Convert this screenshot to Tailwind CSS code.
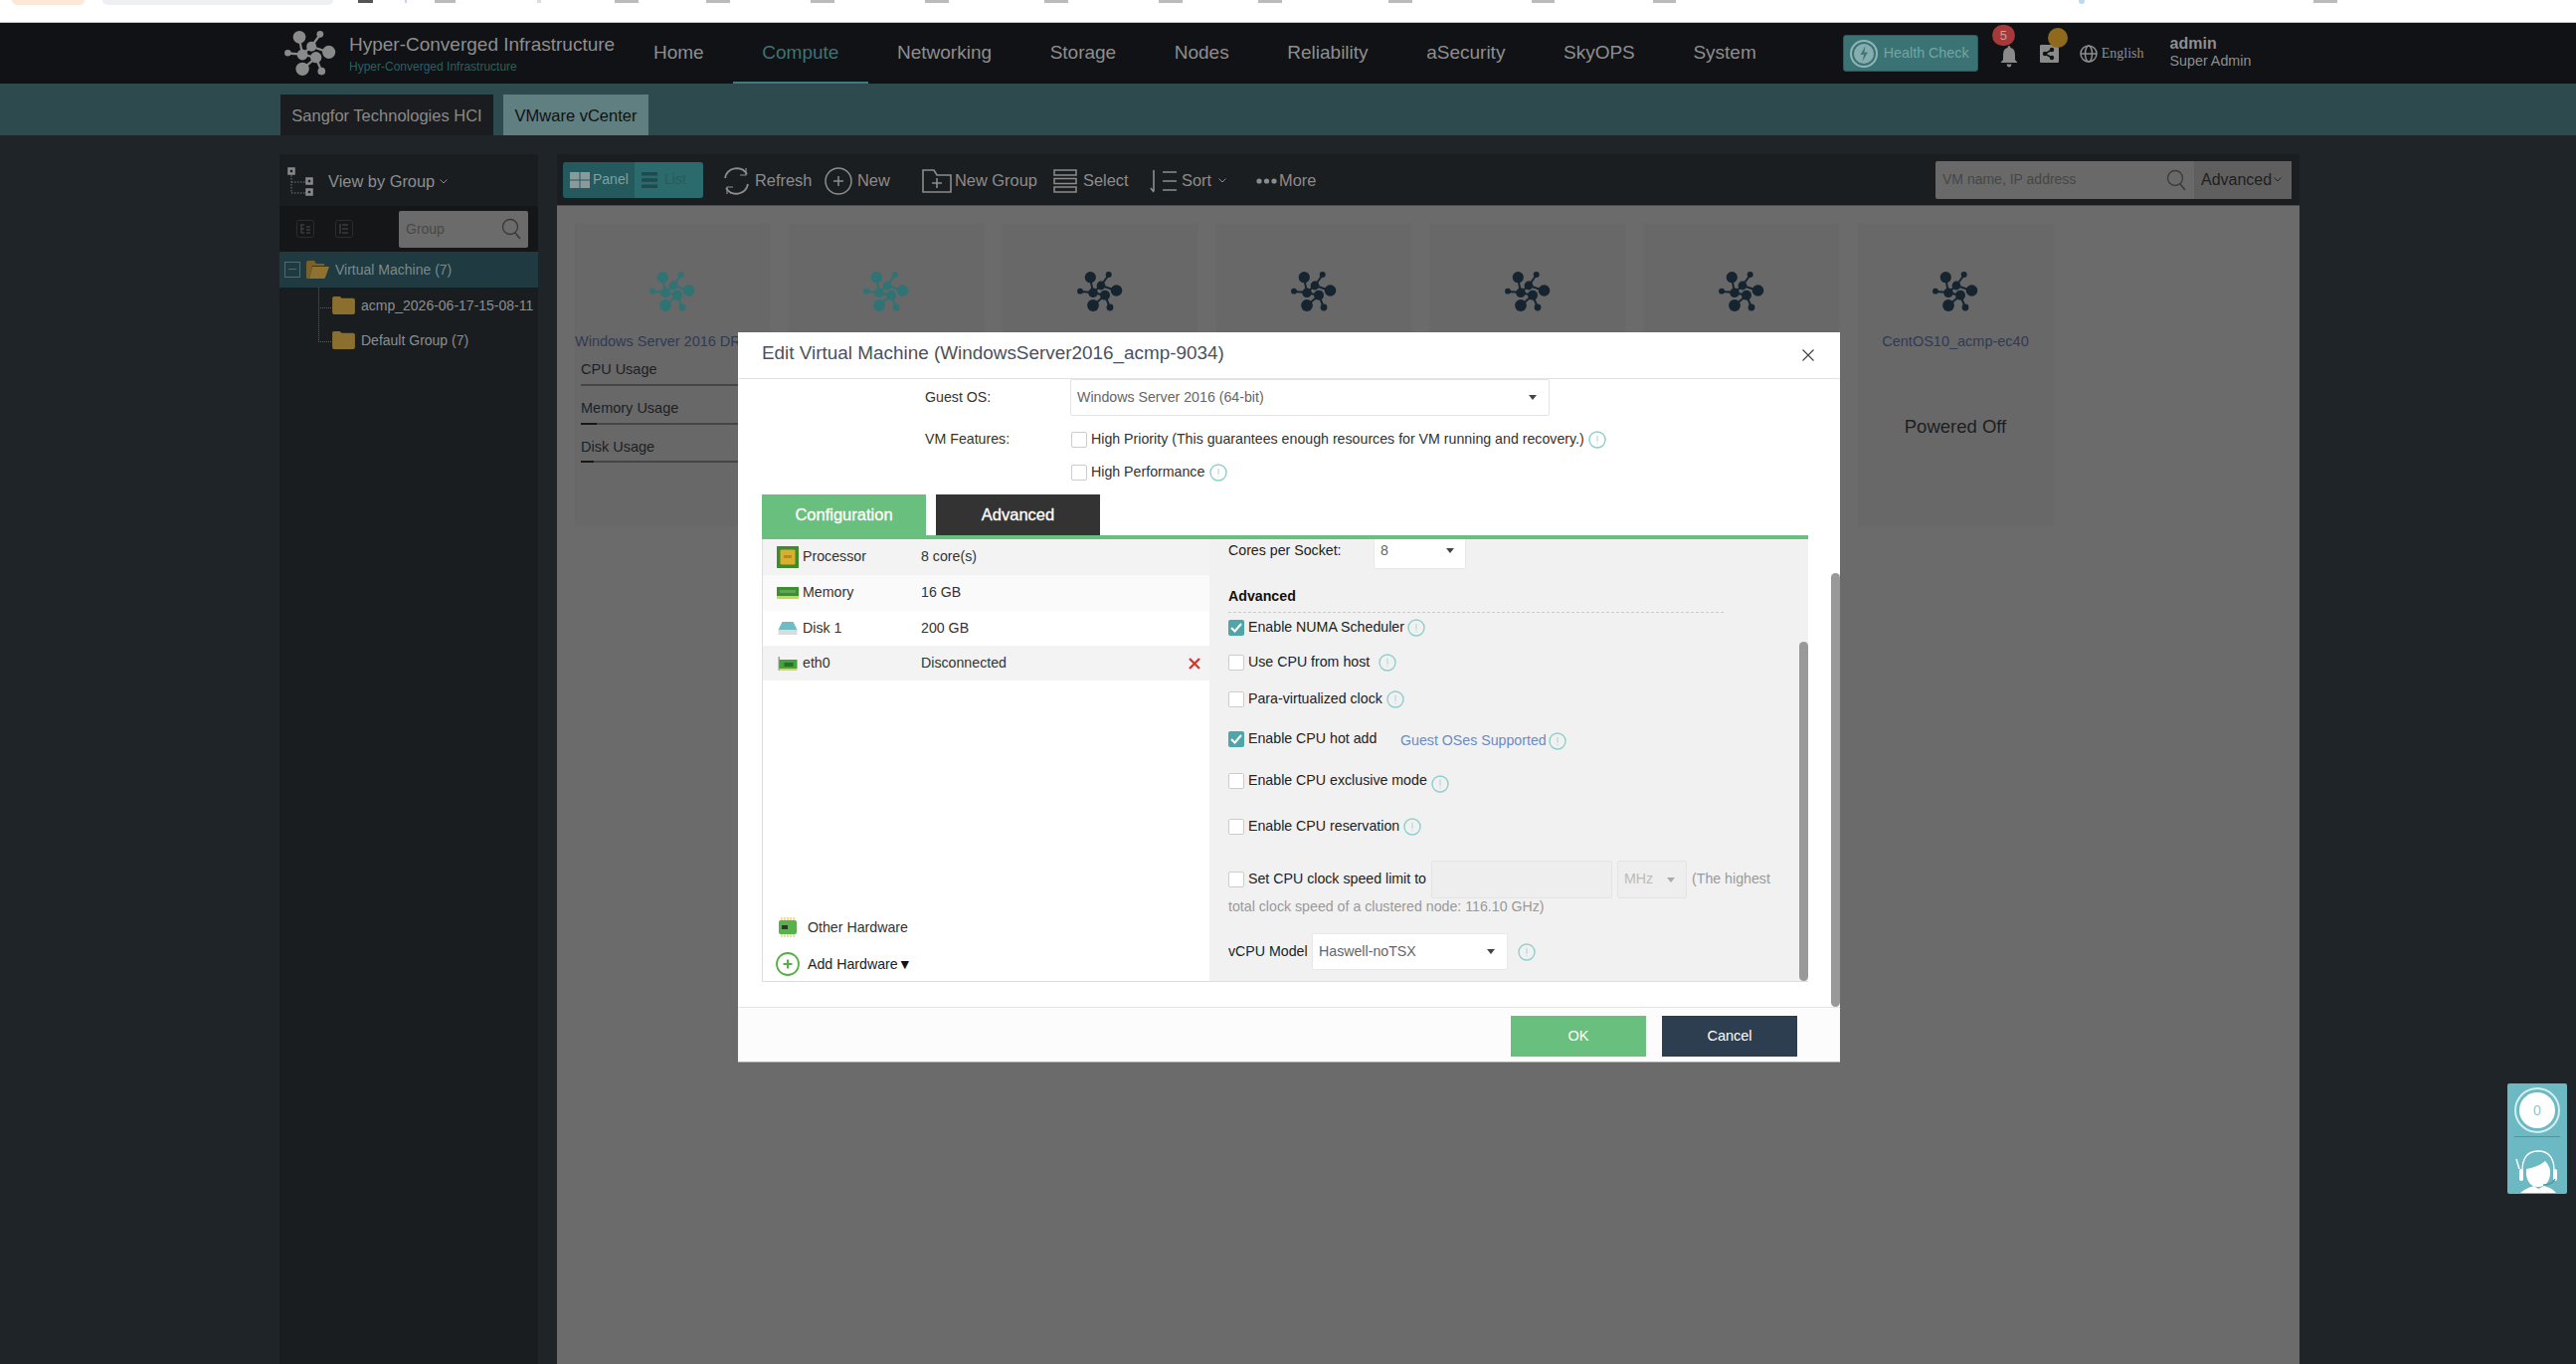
<!DOCTYPE html>
<html lang="en">
<head>
  <meta charset="UTF-8" />
  <title>Hyper-Converged Infrastructure</title>
  <script src="https://cdn.jsdelivr.net/npm/@tailwindcss/browser@4"></script>
</head>
<body class="relative w-[2590px] h-[1371px] overflow-hidden bg-[#1e2427] font-['Liberation_Sans',Arial,sans-serif] text-[14px]">

  <!-- shared icons -->
  <svg class="hidden">
    <symbol id="node" viewBox="0 0 46 40">
      <g stroke="currentColor" stroke-width="2" fill="none">
        <path d="M13 6L16 21M32 3L24 14L39 19M3 20L16 21L28 24L16 34M28 24L33 36M16 21L24 14" />
      </g>
      <g fill="currentColor">
        <circle cx="13.3" cy="5.7" r="5.6" /><circle cx="31.7" cy="3" r="3" /><circle cx="24" cy="14" r="4.4" />
        <circle cx="39.500" cy="19" r="5.800" /><circle cx="3" cy="19.700" r="2.900" /><circle cx="16" cy="21.300" r="4.800" />
        <circle cx="28" cy="23.700" r="5" /><circle cx="16" cy="34" r="5.900" /><circle cx="33" cy="36" r="3.400" />
      </g>
    </symbol>
    <symbol id="info" viewBox="0 0 18 18">
      <circle cx="9" cy="9" r="8" fill="none" stroke="#90cfcc" stroke-width="1.4" />
      <path d="M9 4.8v6M9 12.4v1" stroke="#a5d6d4" stroke-width="1" />
    </symbol>
    <symbol id="lens" viewBox="0 0 20 22">
      <circle cx="9" cy="9" r="7.5" fill="none" stroke="currentColor" stroke-width="1.3" />
      <path d="M14 15l5 6" stroke="currentColor" stroke-width="1.5" />
    </symbol>
    <symbol id="folder" viewBox="0 0 24 20">
      <path d="M0 3q0-2 2-2h6l2 2h12q2 0 2 2v13q0 2-2 2H2q-2 0-2-2z" fill="currentColor" />
    </symbol>
  </svg>

  <!-- bottom edge of the browser bar -->
  <div class="flex items-start h-[23px] bg-white border-b border-[#c8c8c8]">
    <span class="ml-[12px] w-[73px] h-[5px] rounded-b-md bg-[#fde8d8]"></span>
    <span class="ml-[18px] w-[232px] h-[5px] rounded-b-md bg-[#eef0f3]"></span>
    <span class="ml-[25px] w-[15px] h-[3px] bg-[#555]"></span>
    <span class="ml-[32px] w-[2px] h-[3px] bg-[#c9d2f0]"></span>
    <span class="ml-[28px] w-[21px] h-[3px] bg-[#bbb]"></span>
    <span class="ml-[82px] w-[4px] h-[3px] bg-[#ddd]"></span>
    <span class="ml-[74px] w-[24px] h-[3px] bg-[#bbb]"></span>
    <span class="ml-[68px] w-[24px] h-[3px] bg-[#bbb]"></span>
    <span class="ml-[81px] w-[24px] h-[3px] bg-[#bbb]"></span>
    <span class="ml-[91px] w-[24px] h-[3px] bg-[#bbb]"></span>
    <span class="ml-[96px] w-[24px] h-[3px] bg-[#bbb]"></span>
    <span class="ml-[91px] w-[24px] h-[3px] bg-[#bbb]"></span>
    <span class="ml-[76px] w-[24px] h-[3px] bg-[#bbb]"></span>
    <span class="ml-[107px] w-[24px] h-[3px] bg-[#bbb]"></span>
    <span class="ml-[120px] w-[23px] h-[3px] bg-[#bbb]"></span>
    <span class="ml-[99px] w-[23px] h-[3px] bg-[#bbb]"></span>
    <span class="ml-[405px] w-[6px] h-[4px] rounded-b-full bg-[#bcd8f5]"></span>
    <span class="ml-[230px] w-[24px] h-[3px] bg-[#bbb]"></span>
  </div>

  <!-- top nav -->
  <header class="flex items-center h-[61px] bg-[#101216] text-[#8e8e8e]">
    <svg class="ml-[286px] w-[52px] h-[47px] text-[#8a8a8a]"><use href="#node" /></svg>
    <div class="ml-[13px] w-[306px]">
      <div class="text-[19px] leading-[24px] whitespace-nowrap">Hyper-Converged Infrastructure</div>
      <div class="text-[12px] leading-[16px] mt-[2px] text-[#2d5f60] whitespace-nowrap">Hyper-Converged Infrastructure</div>
    </div>
    <nav class="flex items-center h-full text-[19px]">
      <a class="mr-[58.600px]">Home</a>
      <a class="relative h-full flex items-center mr-[58.600px] text-[#3f7273]">Compute<span class="absolute left-[-29px] right-[-30px] bottom-0 h-[2px] bg-[#3f7a7c]"></span></a>
      <a class="mr-[58.600px]">Networking</a>
      <a class="mr-[58.600px]">Storage</a>
      <a class="mr-[58.600px]">Nodes</a>
      <a class="mr-[58.600px]">Reliability</a>
      <a class="mr-[58.600px]">aSecurity</a>
      <a class="mr-[58.600px]">SkyOPS</a>
      <a>System</a>
    </nav>
    <div class="ml-[87px] flex items-center w-[136px] h-[37px] rounded-[3px] bg-[#3b7375] border border-[#2a5a5c] text-[#73a5a5] text-[14.300px] whitespace-nowrap">
      <svg class="ml-[6px] w-[28px] h-[28px]" viewBox="0 0 28 28"><circle cx="14" cy="14" r="13" fill="none" stroke="#8fb5b5" stroke-width="2" /><circle cx="14" cy="14" r="10" fill="#86aeae" /><path d="M15.5 6l-5 9h3.5l-1.500 7 5.500-9.500h-3.500z" fill="#3f7a7c" /></svg>
      <span class="ml-[6px]">Health Check</span>
    </div>
    <div class="relative ml-[22px] w-[18px] h-[36px]">
      <span class="absolute left-[-8px] top-[-11px] w-[23px] h-[21px] rounded-full bg-[#a63a3a] text-[#c9a0a0] text-[13px] leading-[21px] text-center">5</span>
      <svg class="absolute left-0 top-[10px] w-[18px] h-[22px]" viewBox="0 0 18 22"><path d="M9 0q1.500 0 1.500 2q4.500 1 4.500 7v5l2.500 3H.5L3 14V9q0-6 4.500-7Q7.500 0 9 0zM6.500 18.500h5q-.5 3-2.500 3t-2.500-3z" fill="#8a8a8a" /></svg>
    </div>
    <div class="relative ml-[22px] w-[19px] h-[18px] rounded-[1px] bg-[#8a8a8a]">
      <svg class="absolute inset-0 w-[19px] h-[18px]" viewBox="0 0 19 18"><path d="M5 9l7-4M5 9l7 4" stroke="#101216" stroke-width="1.500" /><circle cx="5" cy="9" r="2.200" fill="#101216" /><circle cx="12" cy="5" r="2.200" fill="#101216" /><circle cx="12" cy="13" r="2.200" fill="#101216" /></svg>
      <span class="absolute left-[8px] top-[-17px] w-[20px] h-[20px] rounded-full bg-[#8f6a1c]"></span>
    </div>
    <svg class="ml-[21px] w-[18px] h-[18px]" viewBox="0 0 18 18" fill="none" stroke="#8e8e8e" stroke-width="1.500"><circle cx="9" cy="9" r="8" /><ellipse cx="9" cy="9" rx="3.500" ry="8" /><path d="M1 9h16" /></svg>
    <span class="ml-[4px] font-['Liberation_Serif',serif] text-[14px]">English</span>
    <div class="ml-[26px] -mt-[2px] whitespace-nowrap">
      <div class="font-bold text-[16px] leading-[18px]">admin</div>
      <div class="text-[14.300px] leading-[17px]">Super Admin</div>
    </div>
  </header>

  <!-- platform tabs -->
  <div class="flex items-end gap-[10px] h-[52px] pl-[282px] bg-[#2d4b4f] text-[16.500px]">
    <div class="flex items-center justify-center w-[214px] h-[41px] pt-[2px] bg-[#1a1c1f] text-[#8a8a8a]">Sangfor Technologies HCI</div>
    <div class="flex items-center justify-center w-[146px] h-[41px] pt-[2px] bg-[#5f7f80] text-[#111]">VMware vCenter</div>
  </div>

  <div class="flex pt-[19px] pl-[281px] gap-[19px] h-[1235px]">
    <!-- group tree -->
    <aside class="w-[260px] bg-[#1a1d20] text-[#8a8f91]">
      <div class="flex items-center h-[52px] pl-[8px] pt-[3px]">
        <svg class="w-[28px] h-[30px]" viewBox="0 0 28 30" fill="none"><path d="M4 8v18h14M4 15h14" stroke="#777" stroke-dasharray="1.500 1.500" /><g stroke="#8a8a8a" stroke-width="2.500"><rect x="1.500" y="1.500" width="5" height="5" /><rect x="19.500" y="11.500" width="5" height="5" /><rect x="19.500" y="22.500" width="5" height="5" /></g></svg>
        <span class="ml-[13px] text-[16.400px]">View by Group</span>
        <svg class="ml-[5px] w-[8px] h-[5px]" viewBox="0 0 8 5" fill="none" stroke="#8a8a8a"><path d="M.5.5L4 4L7.500.5" /></svg>
      </div>
      <div class="flex items-center h-[46px] bg-[#141618]">
        <svg class="ml-[17px] w-[18px] h-[18px]" viewBox="0 0 18 18" fill="none" stroke="#4d4d4d"><rect x=".5" y=".5" width="17" height="17" rx="2" stroke="#2a2d2f" /><path d="M4 5h4M5 5v8h3M5 9h3M10 7h4M10 10h4M10 13h4" /></svg>
        <svg class="ml-[21px] w-[18px] h-[18px]" viewBox="0 0 18 18" fill="none" stroke="#4d4d4d"><rect x=".5" y=".5" width="17" height="17" rx="2" stroke="#2a2d2f" /><path d="M5 4v10M7 5h6M7 9h6M7 13h6" /></svg>
        <div class="ml-[46px] flex items-center justify-between w-[130px] h-[37px] rounded-[2px] bg-[#6b6b6b] text-[#484848] pl-[7px] pr-[7px]">
          <span>Group</span>
          <svg class="w-[20px] h-[22px] text-[#383838]"><use href="#lens" /></svg>
        </div>
      </div>
      <div class="flex items-center h-[36px] pl-[5px] bg-[#1f3a40] text-[#7a8a8d]">
        <span class="relative w-[16px] h-[16px] border border-[#55686c]"><span class="absolute left-[3px] right-[3px] top-[6px] h-[1px] bg-[#55686c]"></span></span>
        <svg class="ml-[6px] w-[23px] h-[18px] text-[#8f7230]" viewBox="0 0 23 18"><path d="M0 2q0-2 2-2h6l2 3h8v2H6L3 18H1q-1 0-1-1z" fill="#7a6128" /><path d="M6 6h17l-4 11q0 1-2 1H3z" fill="currentColor" /></svg>
        <span class="ml-[6px]">Virtual Machine (7)</span>
      </div>
      <div class="relative pl-[53px] pt-[8px]">
        <span class="absolute left-[39px] top-0 h-[55px] w-[13px] border-l border-b border-dotted border-[#5a5f62]"></span>
        <span class="absolute left-[39px] top-[20px] w-[13px] border-b border-dotted border-[#5a5f62]"></span>
        <div class="flex items-center h-[19px] whitespace-nowrap">
          <svg class="w-[23px] h-[19px] text-[#8a6f2e]"><use href="#folder" /></svg>
          <span class="ml-[6px] pt-[2px]">acmp_2026-06-17-15-08-11</span>
        </div>
        <div class="flex items-center h-[19px] mt-[16px]">
          <svg class="w-[23px] h-[19px] text-[#8a6f2e]"><use href="#folder" /></svg>
          <span class="ml-[6px] pt-[2px]">Default Group (7)</span>
        </div>
      </div>
    </aside>

    <main class="w-[1752px] flex flex-col">
      <div class="flex items-center h-[52px] bg-[#1b1e20] text-[#8c8c8c] text-[16.400px] border-b border-[#4a4a4a] whitespace-nowrap">
        <div class="ml-[6px] flex h-[36px] w-[141px] rounded-[3px] overflow-hidden">
          <div class="flex items-center w-[72px] bg-[#245a5e]">
            <svg class="ml-[7px] w-[20px] h-[16px]" viewBox="0 0 20 16" fill="#8a9a9a"><rect width="9.500" height="7.500" /><rect x="10.500" width="9.500" height="7.500" /><rect y="8.500" width="9.500" height="7.500" /><rect x="10.500" y="8.500" width="9.500" height="7.500" /></svg>
            <span class="ml-[3px] text-[#7fa0a0] text-[14px]">Panel</span>
          </div>
          <div class="flex items-center flex-1 bg-[#2b6a6d]">
            <svg class="ml-[7px] w-[16px] h-[16px]" viewBox="0 0 16 16" fill="#1f4a4e"><rect width="16" height="3.500" /><rect y="6.200" width="16" height="3.500" /><rect y="12.500" width="16" height="3.500" /></svg>
            <span class="ml-[7px] text-[#2a5a5e] text-[14px]">List</span>
          </div>
        </div>
        <svg class="ml-[19px] mt-[2px] w-[29px] h-[30px]" viewBox="0 0 29 30" fill="none" stroke="#8c8c8c" stroke-width="1.800"><path d="M3 12a12 12 0 0 1 22-4M26 18a12 12 0 0 1-22 4" /><path d="M24 2v7h-6M5 28v-7h6" stroke-width="1.200" /></svg>
        <span class="ml-[4px] w-[57px] pt-[2px]">Refresh</span>
        <svg class="ml-[13px] mt-[2px] w-[28px] h-[30px]" viewBox="0 0 28 30" fill="none" stroke="#8c8c8c" stroke-width="1.500"><circle cx="14" cy="15" r="13" /><path d="M14 10v10M9 15h10" /></svg>
        <span class="ml-[5px] w-[33px] pt-[2px]">New</span>
        <svg class="ml-[32px] mt-[2px] w-[30px] h-[24px]" viewBox="0 0 30 24" fill="none" stroke="#8c8c8c" stroke-width="1.600"><path d="M1 1h11l3 5h14v17H1zM15 9v10M10 14h10" /></svg>
        <span class="ml-[3px] w-[83px] pt-[2px]">New Group</span>
        <svg class="ml-[16px] mt-[2px] w-[24px] h-[24px]" viewBox="0 0 24 24" fill="none" stroke="#8c8c8c" stroke-width="1.500"><rect x="1" y="1" width="22" height="5" /><rect x="1" y="9.500" width="22" height="5" /><rect x="1" y="18" width="22" height="5" /></svg>
        <span class="ml-[6px] w-[46px] pt-[2px]">Select</span>
        <svg class="ml-[20px] mt-[2px] w-[29px] h-[24px]" viewBox="0 0 29 24" fill="none" stroke="#8c8c8c" stroke-width="1.600"><path d="M5 1v21M2 19l3 4M14 3h14M14 12h14M14 21h14" /></svg>
        <span class="ml-[4px] w-[30px] pt-[2px]">Sort</span>
        <svg class="ml-[7px] mt-[2px] w-[8px] h-[5px]" viewBox="0 0 8 5" fill="none" stroke="#8c8c8c"><path d="M.5.5L4 4L7.500.5" /></svg>
        <svg class="ml-[30px] mt-[2px] w-[21px] h-[6px]" viewBox="0 0 21 6" fill="#8c8c8c"><circle cx="3" cy="3" r="2.600" /><circle cx="10.500" cy="3" r="2.600" /><circle cx="18" cy="3" r="2.600" /></svg>
        <span class="ml-[2px] w-[37px] pt-[2px]">More</span>
        <div class="ml-auto mr-[8px] flex h-[38px]">
          <div class="flex items-center justify-between w-[260px] bg-[#696969] rounded-l-[2px] text-[#464646] pl-[7px] pr-[8px] text-[14px]">
            <span>VM name, IP address</span>
            <svg class="w-[20px] h-[22px] text-[#3a3a3a]"><use href="#lens" /></svg>
          </div>
          <div class="flex items-center w-[98px] bg-[#5f5f5f] text-[#1e1e1e] pl-[7px] text-[16px]">
            <span>Advanced</span>
            <svg class="ml-[2px] w-[8px] h-[5px]" viewBox="0 0 8 5" fill="none" stroke="#222"><path d="M.5.5L4 4L7.500.5" /></svg>
          </div>
        </div>
      </div>

      <!-- vm cards -->
      <div class="flex-1 bg-[#6b6b6b] pt-[17px] pl-[17px] flex gap-[17px] items-start">
        <div class="w-[198px] h-[306px] bg-[#686868] border border-[#6a6a6a] rounded-[2px] overflow-hidden pt-[48px]">
          <svg class="block mx-auto w-[46px] h-[40px] text-[#2f7375]"><use href="#node" /></svg>
          <div class="mt-[21px] text-[#2f3a55] text-[14.500px] leading-[18px] whitespace-nowrap">Windows Server 2016 DR_acmp</div>
          <div class="px-[6px] mt-[9px] text-[#1c1f22] text-[14.500px]">
            <div class="leading-[20px]">CPU Usage</div>
            <div class="mt-[5px] h-[2px] bg-[#454545]"></div>
            <div class="mt-[12px] leading-[20px]">Memory Usage</div>
            <div class="mt-[5px] h-[2px] bg-[#454545]"><div class="w-[16px] h-[2px] bg-[#14171a]"></div></div>
            <div class="mt-[12px] leading-[20px]">Disk Usage</div>
            <div class="mt-[4px] h-[2px] bg-[#454545]"><div class="w-[13px] h-[2px] bg-[#14171a]"></div></div>
          </div>
        </div>
        <div class="w-[198px] h-[306px] bg-[#686868] border border-[#6a6a6a] rounded-[2px] pt-[48px]">
          <svg class="block mx-auto w-[46px] h-[40px] text-[#2f7375]"><use href="#node" /></svg>
        </div>
        <div class="w-[198px] h-[306px] bg-[#686868] border border-[#6a6a6a] rounded-[2px] pt-[48px]">
          <svg class="block mx-auto w-[46px] h-[40px] text-[#162430]"><use href="#node" /></svg>
        </div>
        <div class="w-[198px] h-[306px] bg-[#686868] border border-[#6a6a6a] rounded-[2px] pt-[48px]">
          <svg class="block mx-auto w-[46px] h-[40px] text-[#162430]"><use href="#node" /></svg>
        </div>
        <div class="w-[198px] h-[306px] bg-[#686868] border border-[#6a6a6a] rounded-[2px] pt-[48px]">
          <svg class="block mx-auto w-[46px] h-[40px] text-[#162430]"><use href="#node" /></svg>
        </div>
        <div class="w-[198px] h-[306px] bg-[#686868] border border-[#6a6a6a] rounded-[2px] pt-[48px]">
          <svg class="block mx-auto w-[46px] h-[40px] text-[#162430]"><use href="#node" /></svg>
        </div>
        <div class="w-[198px] h-[306px] bg-[#686868] border border-[#6a6a6a] rounded-[2px] pt-[48px] text-center">
          <svg class="block mx-auto w-[46px] h-[40px] text-[#162430]"><use href="#node" /></svg>
          <div class="mt-[21px] text-[#2f3a55] text-[14.500px] leading-[18px] whitespace-nowrap">CentOS10_acmp-ec40</div>
          <div class="mt-[65px] text-[#1c1f22] text-[18.500px] leading-[24px]">Powered Off</div>
        </div>
      </div>
    </main>
  </div>

  <!-- edit vm dialog -->
  <div class="absolute left-[742px] top-[334px] w-[1108px] h-[734px] bg-white border-b border-[#aaa] flex flex-col">
    <div class="flex items-center justify-between h-[47px] pb-[4px] pl-[24px] pr-[26px] border-b border-[#e2e2e2]">
      <span class="text-[18.900px] text-[#4a5160] whitespace-nowrap">Edit Virtual Machine (WindowsServer2016_acmp-9034)</span>
      <svg class="mt-[4px] w-[12px] h-[12px]" viewBox="0 0 12 12" stroke="#444" stroke-width="1.200"><path d="M.5.5l11 11M11.500.5l-11 11" /></svg>
    </div>

    <div class="relative h-[631px] text-[14.200px] text-[#333]">
      <div class="flex items-center h-[37px] pl-[188px]">
        <span class="w-[146px]">Guest OS:</span>
        <div class="flex items-center justify-between w-[482px] h-[37px] bg-white border border-[#e3e3e3] rounded-[2px] pl-[6px] pr-[12px] text-[#666]">
          <span>Windows Server 2016 (64-bit)</span>
          <span class="w-0 h-0 border-x-[4px] border-x-transparent border-t-[5px] border-t-[#444]"></span>
        </div>
      </div>
      <div class="flex items-center h-[36px] mt-[6px] pl-[188px]">
        <span class="w-[147px]">VM Features:</span>
        <span class="w-[16px] h-[16px] border border-[#ccc] rounded-[2px] bg-white"></span>
        <span class="ml-[4px]">High Priority (This guarantees enough resources for VM running and recovery.)</span>
        <svg class="ml-[4px] w-[18px] h-[18px]"><use href="#info" /></svg>
      </div>
      <div class="flex items-center h-[30px] pl-[335px]">
        <span class="w-[16px] h-[16px] border border-[#ccc] rounded-[2px] bg-white"></span>
        <span class="ml-[4px]">High Performance</span>
        <svg class="ml-[5px] w-[18px] h-[18px]"><use href="#info" /></svg>
      </div>

      <div class="ml-[24px] mt-[7px] w-[1052px] flex gap-[10px] border-b-4 border-[#69bf7d] text-white text-[16.500px] [-webkit-text-stroke:0.3px_white]">
        <div class="flex items-center justify-center w-[165px] h-[41px] bg-[#69bf7d]">Configuration</div>
        <div class="flex items-center justify-center w-[165px] h-[41px] bg-[#333]">Advanced</div>
      </div>

      <div class="ml-[24px] w-[1052px] h-[445px] flex border-b border-l border-[#ddd] overflow-hidden">
        <!-- hardware list -->
        <div class="flex flex-col w-[449px] bg-white">
          <div class="flex items-center h-[36px] pl-[14px] bg-[#f3f3f3]">
            <svg class="w-[22px] h-[22px]" viewBox="0 0 22 22"><rect width="22" height="22" fill="#3f8a2f" /><rect x="3.500" y="3.500" width="15" height="15" rx="1" fill="#d9b02e" /><rect x="7" y="9" width="8" height="3" fill="#b58b1e" /></svg>
            <span class="ml-[4px] w-[119px]">Processor</span><span>8 core(s)</span>
          </div>
          <div class="flex items-center h-[36px] pl-[14px] bg-[#fafafa]">
            <svg class="w-[22px] h-[12px]" viewBox="0 0 22 12"><rect width="22" height="9" fill="#3b8f2e" /><rect x="3" y="3" width="16" height="3" fill="#6aa05a" /><rect y="9" width="22" height="3" fill="#c9d84a" /></svg>
            <span class="ml-[4px] w-[119px]">Memory</span><span>16 GB</span>
          </div>
          <div class="flex items-center h-[35px] pl-[14px] bg-white">
            <svg class="w-[22px] h-[13px]" viewBox="0 0 19 13"><path d="M4 0h11l4 8H0z" fill="#6fbcc4" /><rect y="8" width="19" height="5" fill="#d8dcdc" /></svg>
            <span class="ml-[4px] w-[119px]">Disk 1</span><span>200 GB</span>
          </div>
          <div class="flex items-center h-[35px] pl-[14px] pr-[9px] bg-[#f3f3f3]">
            <svg class="w-[22px] h-[14px]" viewBox="0 0 19 14"><rect y="0" width="1.500" height="14" fill="#9a9a9a" /><rect x="1" y="3" width="18" height="9" fill="#43a33a" /><rect x="6" y="6" width="9" height="4" fill="#2b6d28" /><rect x="1" y="12" width="18" height="2" fill="#c8d86a" /></svg>
            <span class="ml-[4px] w-[119px]">eth0</span><span>Disconnected</span>
            <svg class="ml-auto w-[12px] h-[12px]" viewBox="0 0 12 12" stroke="#d0392f" stroke-width="2.400"><path d="M1 1l10 10M11 1L1 11" /></svg>
          </div>
          <div class="flex-1"></div>
          <div class="flex items-center h-[36px] mb-[2px] pl-[16px]">
            <svg class="w-[18px] h-[20px]" viewBox="0 0 18 20"><path d="M3 0v20M6 0v20M9 0v20M12 0v20M15 0v20" stroke="#d8c23a" /><rect y="3" width="18" height="14" rx="2" fill="#5ab04c" /><rect x="3" y="8" width="6" height="4" fill="#333" /></svg>
            <span class="ml-[11px] pt-[2px]">Other Hardware</span>
          </div>
          <div class="flex items-center h-[34px] pl-[13px] text-[#222]">
            <svg class="w-[24px] h-[24px]" viewBox="0 0 24 24" fill="none" stroke="#55b145"><circle cx="12" cy="12" r="11" stroke-width="1.800" /><path d="M12 7.500v9M7.500 12h9" stroke-width="2" /></svg>
            <span class="ml-[8px] pt-[2px]">Add Hardware</span><span class="text-[#111] pt-[2px]">▼</span>
          </div>
        </div>

        <!-- processor settings, scrolled part way -->
        <div class="relative flex-1 bg-[#f1f1f1] pl-[19px] text-[#222]">
          <div class="flex items-center h-[37px] -mt-[7px]">
            <span class="w-[146px]">Cores per Socket:</span>
            <div class="flex items-center justify-between w-[93px] h-[37px] bg-white border border-[#e8e8e8] rounded-[2px] pl-[6px] pr-[11px] text-[#666]">
              <span>8</span>
              <span class="w-0 h-0 border-x-[4px] border-x-transparent border-t-[5px] border-t-[#444]"></span>
            </div>
          </div>
          <div class="w-[498px] h-[27px] mt-[17px] font-bold text-[#111] leading-[20px] border-b border-dashed border-[#ccc]">Advanced</div>
          <div class="flex items-center h-[28px] mt-[1px]">
            <span class="flex items-center justify-center w-[16px] h-[16px] bg-[#4fa6a8] rounded-[2px]"><svg class="w-[12px] h-[10px]" viewBox="0 0 12 10" fill="none" stroke="white" stroke-width="2"><path d="M1 5l3.500 3.500L11 1" /></svg></span>
            <span class="ml-[4px]">Enable NUMA Scheduler</span>
            <svg class="ml-[3px] w-[18px] h-[18px]"><use href="#info" /></svg>
          </div>
          <div class="flex items-center h-[28px] mt-[7px]">
            <span class="w-[16px] h-[16px] border border-[#ccc] rounded-[2px] bg-white"></span>
            <span class="ml-[4px]">Use CPU from host</span>
            <svg class="ml-[9px] w-[18px] h-[18px]"><use href="#info" /></svg>
          </div>
          <div class="flex items-center h-[28px] mt-[9px]">
            <span class="w-[16px] h-[16px] border border-[#ccc] rounded-[2px] bg-white"></span>
            <span class="ml-[4px]">Para-virtualized clock</span>
            <svg class="ml-[4px] w-[18px] h-[18px]"><use href="#info" /></svg>
          </div>
          <div class="flex items-center h-[28px] mt-[12px]">
            <span class="flex items-center justify-center w-[16px] h-[16px] bg-[#4fa6a8] rounded-[2px]"><svg class="w-[12px] h-[10px]" viewBox="0 0 12 10" fill="none" stroke="white" stroke-width="2"><path d="M1 5l3.500 3.500L11 1" /></svg></span>
            <span class="ml-[4px] w-[129px] whitespace-nowrap">Enable CPU hot add</span>
            <span class="ml-[24px] mt-[4px] w-[147px] whitespace-nowrap text-[#6a8cc4]">Guest OSes Supported</span>
            <svg class="ml-[2px] mt-[4px] w-[18px] h-[18px]"><use href="#info" /></svg>
          </div>
          <div class="flex items-center h-[28px] mt-[14px]">
            <span class="w-[16px] h-[16px] border border-[#ccc] rounded-[2px] bg-white"></span>
            <span class="ml-[4px]">Enable CPU exclusive mode</span>
            <svg class="ml-[4px] mt-[6px] w-[18px] h-[18px]"><use href="#info" /></svg>
          </div>
          <div class="flex items-center h-[28px] mt-[18px]">
            <span class="w-[16px] h-[16px] border border-[#ccc] rounded-[2px] bg-white"></span>
            <span class="ml-[4px]">Enable CPU reservation</span>
            <svg class="ml-[4px] w-[18px] h-[18px]"><use href="#info" /></svg>
          </div>
          <div class="flex items-center h-[38px] mt-[20px]">
            <span class="w-[16px] h-[16px] border border-[#ccc] rounded-[2px] bg-white"></span>
            <span class="ml-[4px] w-[180px] whitespace-nowrap">Set CPU clock speed limit to</span>
            <span class="ml-[4px] w-[182px] h-[38px] bg-[#eeeeee] border border-[#e4e4e4] rounded-[2px]"></span>
            <div class="ml-[5px] flex items-center justify-between w-[70px] h-[38px] bg-[#eeeeee] border border-[#e4e4e4] rounded-[2px] pl-[6px] pr-[11px] text-[#bbb]">
              <span>MHz</span>
              <span class="w-0 h-0 border-x-[4px] border-x-transparent border-t-[5px] border-t-[#aaa]"></span>
            </div>
            <span class="ml-[5px] text-[#999] whitespace-nowrap">(The highest</span>
          </div>
          <div class="h-[16px] leading-[16px] text-[#999]">total clock speed of a clustered node: 116.10 GHz)</div>
          <div class="flex items-center h-[37px] mt-[19px]">
            <span class="w-[84px]">vCPU Model</span>
            <div class="flex items-center justify-between w-[197px] h-[37px] bg-white border border-[#e8e8e8] rounded-[2px] pl-[6px] pr-[12px] text-[#666]">
              <span>Haswell-noTSX</span>
              <span class="w-0 h-0 border-x-[4px] border-x-transparent border-t-[5px] border-t-[#444]"></span>
            </div>
            <svg class="ml-[10px] w-[18px] h-[18px]"><use href="#info" /></svg>
          </div>
          <span class="absolute right-0 top-[103px] bottom-0 w-[9px] rounded-full bg-[#999]"></span>
        </div>
      </div>
      <span class="absolute left-[1099px] top-[195px] h-[436px] w-[9px] rounded-full bg-[#999]"></span>
    </div>

    <div class="flex justify-end gap-[16px] flex-1 pt-[8px] pr-[43px] bg-[#fcfcfc] border-t border-[#e5e5e5] text-[14.500px] text-white">
      <div class="flex items-center justify-center w-[136px] h-[41px] bg-[#69bf7d]">OK</div>
      <div class="flex items-center justify-center w-[136px] h-[41px] bg-[#2c3e50]">Cancel</div>
    </div>
  </div>

  <!-- floating help widget -->
  <div class="absolute left-[2521px] top-[1089px] w-[60px] h-[111px] rounded-[2px] bg-[#6cb9c3] flex flex-col items-center">
    <div class="mt-[4px] flex items-center justify-center w-[46px] h-[46px] rounded-full border-2 border-[#d5eef0]">
      <div class="flex items-center justify-center w-[36px] h-[36px] rounded-full bg-white text-[#8fc7cd] text-[14px]">0</div>
    </div>
    <div class="mt-[3px] w-[46px] h-[1px] bg-[#4f959e]"></div>
    <svg class="mt-[12px] w-[46px] h-[44px]" viewBox="0 0 46 44" fill="none">
      <path d="M8 22Q8 2 24 2Q40 2 40 22" stroke="white" stroke-width="1.300" />
      <rect x="5" y="20" width="4" height="12" rx="2" fill="white" />
      <rect x="39" y="20" width="4" height="12" rx="2" fill="white" />
      <path d="M2 10l3 10" stroke="white" stroke-width="1.500" />
      <path d="M12 20Q24 18 31 12Q37 18 36 26Q34 38 24 38Q14 38 12 26z" fill="white" />
      <path d="M6 44Q12 39 20 37L24 40L30 37Q38 39 42 44z" fill="white" />
      <path d="M41 30Q38 36 29 36" stroke="#4f959e" stroke-width="1.300" />
    </svg>
  </div>

</body>
</html>
